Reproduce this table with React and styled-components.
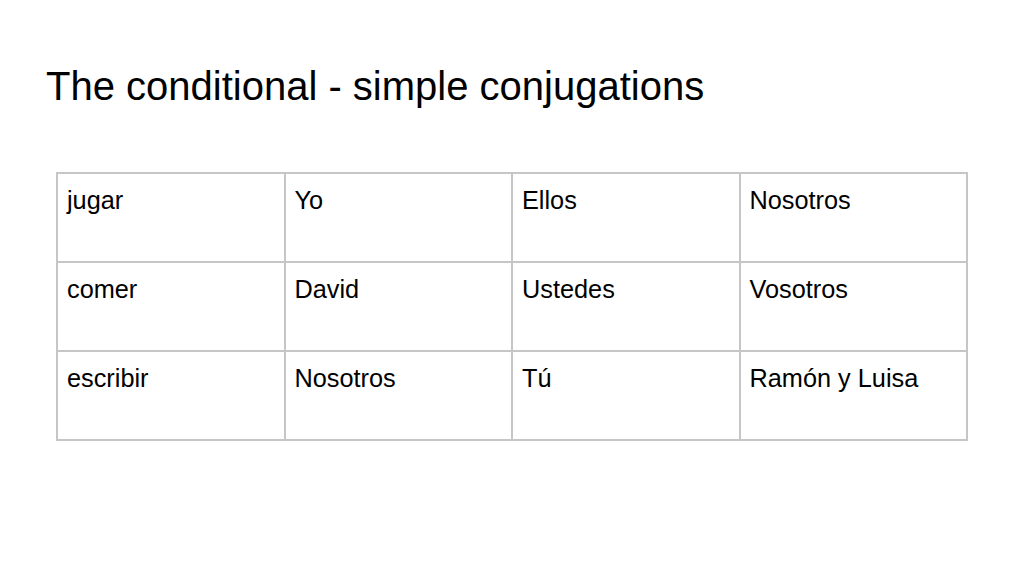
import styled, { createGlobalStyle } from "styled-components";

const GlobalStyle = createGlobalStyle`
  html, body {
    margin: 0;
    padding: 0;
    background: #ffffff;
    font-family: "Liberation Sans", Arial, sans-serif;
    color: #000000;
  }
`;

const rows = [
  ["jugar", "Yo", "Ellos", "Nosotros"],
  ["comer", "David", "Ustedes", "Vosotros"],
  ["escribir", "Nosotros", "Tú", "Ramón y Luisa"],
];

function App() {
  return (
    <>
      <GlobalStyle />
      <Slide>
        <Title>The conditional - simple conjugations</Title>
        <Grid>
          <tbody>
            {rows.map((row, i) => (
              <Row key={i}>
                {row.map((cell, j) => (
                  <Cell key={j}>{cell}</Cell>
                ))}
              </Row>
            ))}
          </tbody>
        </Grid>
      </Slide>
    </>
  );
}

const Slide = styled.div`
  width: 1024px;
  height: 576px;
  padding: 63px 0 0 46px;
  box-sizing: border-box;
  overflow: hidden;
`;

const Title = styled.h1`
  margin: 0;
  font-size: 40px;
  font-weight: normal;
  line-height: 46px;
`;

const Grid = styled.table`
  margin: 63px 0 0 10px;
  width: 912px;
  table-layout: fixed;
  border-collapse: collapse;
`;

const Row = styled.tr`
  height: 89px;
`;

const Cell = styled.td`
  border: 2px solid #c6c6c6;
  vertical-align: top;
  padding: 12px 9px 0;
  font-size: 25.3px;
  line-height: 29px;
`;

export default App;
